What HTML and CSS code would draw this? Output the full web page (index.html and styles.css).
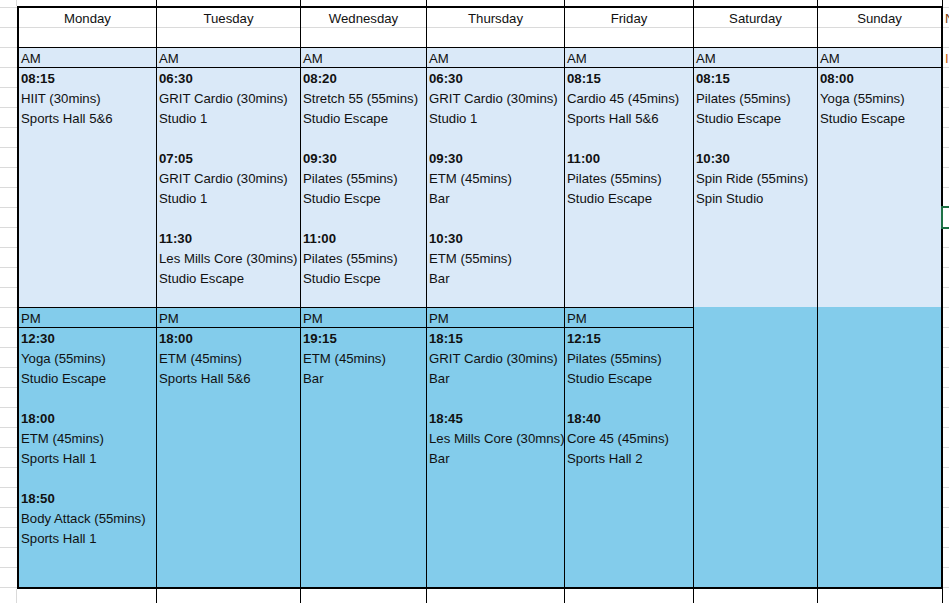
FILE: index.html
```html
<!DOCTYPE html>
<html lang="en">
<head>
<meta charset="utf-8">
<title>Weekly Class Timetable</title>
<link rel="stylesheet" href="styles.css">
</head>
<body>
<div class="page">
  <div class="strip top">
    <div class="c g"></div><div class="c"></div><div class="c"></div><div class="c"></div><div class="c"></div><div class="c"></div><div class="c"></div><div class="c"></div><div class="c n"></div>
  </div>
  <div class="mid">
    <div class="stub left"></div>
    <div class="sheet">
      <div class="day">
        <div class="hdr">Monday</div>
        <div class="blank"></div>
        <div class="lbl am">AM</div>
        <div class="body am">
          <div class="ln t">08:15</div><div class="ln">HIIT (30mins)</div><div class="ln">Sports Hall 5&amp;6</div>
        </div>
        <div class="lbl pm">PM</div>
        <div class="body pm">
          <div class="ln t">12:30</div><div class="ln">Yoga (55mins)</div><div class="ln">Studio Escape</div><div class="ln"></div>
          <div class="ln t">18:00</div><div class="ln">ETM (45mins)</div><div class="ln">Sports Hall 1</div><div class="ln"></div>
          <div class="ln t">18:50</div><div class="ln">Body Attack (55mins)</div><div class="ln">Sports Hall 1</div>
        </div>
      </div>
      <div class="day">
        <div class="hdr">Tuesday</div>
        <div class="blank"></div>
        <div class="lbl am">AM</div>
        <div class="body am">
          <div class="ln t">06:30</div><div class="ln">GRIT Cardio (30mins)</div><div class="ln">Studio 1</div><div class="ln"></div>
          <div class="ln t">07:05</div><div class="ln">GRIT Cardio (30mins)</div><div class="ln">Studio 1</div><div class="ln"></div>
          <div class="ln t">11:30</div><div class="ln">Les Mills Core (30mins)</div><div class="ln">Studio Escape</div>
        </div>
        <div class="lbl pm">PM</div>
        <div class="body pm">
          <div class="ln t">18:00</div><div class="ln">ETM (45mins)</div><div class="ln">Sports Hall 5&amp;6</div>
        </div>
      </div>
      <div class="day">
        <div class="hdr">Wednesday</div>
        <div class="blank"></div>
        <div class="lbl am">AM</div>
        <div class="body am">
          <div class="ln t">08:20</div><div class="ln">Stretch 55 (55mins)</div><div class="ln">Studio Escape</div><div class="ln"></div>
          <div class="ln t">09:30</div><div class="ln">Pilates (55mins)</div><div class="ln">Studio Escpe</div><div class="ln"></div>
          <div class="ln t">11:00</div><div class="ln">Pilates (55mins)</div><div class="ln">Studio Escpe</div>
        </div>
        <div class="lbl pm">PM</div>
        <div class="body pm">
          <div class="ln t">19:15</div><div class="ln">ETM (45mins)</div><div class="ln">Bar</div>
        </div>
      </div>
      <div class="day">
        <div class="hdr">Thursday</div>
        <div class="blank"></div>
        <div class="lbl am">AM</div>
        <div class="body am">
          <div class="ln t">06:30</div><div class="ln">GRIT Cardio (30mins)</div><div class="ln">Studio 1</div><div class="ln"></div>
          <div class="ln t">09:30</div><div class="ln">ETM (45mins)</div><div class="ln">Bar</div><div class="ln"></div>
          <div class="ln t">10:30</div><div class="ln">ETM (55mins)</div><div class="ln">Bar</div>
        </div>
        <div class="lbl pm">PM</div>
        <div class="body pm">
          <div class="ln t">18:15</div><div class="ln">GRIT Cardio (30mins)</div><div class="ln">Bar</div><div class="ln"></div>
          <div class="ln t">18:45</div><div class="ln">Les Mills Core (30mns)</div><div class="ln">Bar</div>
        </div>
      </div>
      <div class="day">
        <div class="hdr">Friday</div>
        <div class="blank"></div>
        <div class="lbl am">AM</div>
        <div class="body am">
          <div class="ln t">08:15</div><div class="ln">Cardio 45 (45mins)</div><div class="ln">Sports Hall 5&amp;6</div><div class="ln"></div>
          <div class="ln t">11:00</div><div class="ln">Pilates (55mins)</div><div class="ln">Studio Escape</div>
        </div>
        <div class="lbl pm">PM</div>
        <div class="body pm">
          <div class="ln t">12:15</div><div class="ln">Pilates (55mins)</div><div class="ln">Studio Escape</div><div class="ln"></div>
          <div class="ln t">18:40</div><div class="ln">Core 45 (45mins)</div><div class="ln">Sports Hall 2</div>
        </div>
      </div>
      <div class="day">
        <div class="hdr">Saturday</div>
        <div class="blank"></div>
        <div class="lbl am">AM</div>
        <div class="body am open">
          <div class="ln t">08:15</div><div class="ln">Pilates (55mins)</div><div class="ln">Studio Escape</div><div class="ln"></div>
          <div class="ln t">10:30</div><div class="ln">Spin Ride (55mins)</div><div class="ln">Spin Studio</div>
        </div>
        <div class="fill pm"></div>
      </div>
      <div class="day">
        <div class="hdr">Sunday</div>
        <div class="blank"></div>
        <div class="lbl am">AM</div>
        <div class="body am open">
          <div class="ln t">08:00</div><div class="ln">Yoga (55mins)</div><div class="ln">Studio Escape</div>
        </div>
        <div class="fill pm"></div>
      </div>
    </div>
    <div class="stub right">
      <div class="rs first dark">N</div>
      <div class="rs"></div>
      <div class="rs orange">I</div>
    </div>
  </div>
  <div class="strip bottom">
    <div class="c g"></div><div class="c"></div><div class="c"></div><div class="c"></div><div class="c"></div><div class="c"></div><div class="c"></div><div class="c"></div><div class="c n"></div>
  </div>
  <div class="sel"></div>
</div>
</body>
</html>
```

FILE: styles.css
```css
html, body {
  margin: 0;
  padding: 0;
  background: #ffffff;
}

body {
  font-family: "Liberation Sans", Arial, sans-serif;
  font-size: 13.2px;
  color: #111111;
  width: 949px;
  height: 603px;
  overflow: hidden;
}

.page {
  position: relative;
  display: flex;
  flex-direction: column;
  width: 949px;
  height: 603px;
}

.strip {
  display: grid;
  grid-template-columns: 17px 140px 144px 126px 138px 129px 124px 125px 6px;
}

.strip.top {
  height: 6px;
}

.strip.bottom {
  height: 14px;
}

.strip .c {
  box-sizing: border-box;
  border-right: 1px solid #000000;
}

.strip .c.g {
  border-right-color: #dadada;
}

.strip .c.n {
  border-right: 0;
}

.mid {
  display: flex;
  height: 583px;
}

.stub {
  box-sizing: border-box;
  background-image: linear-gradient(to bottom, transparent 19px, #dadada 19px);
  background-size: 100% 20px;
  background-position: 0 2px;
}

.stub.left {
  width: 17px;
}

.stub.right {
  width: 6px;
  padding-left: 2px;
  overflow: hidden;
  display: flex;
  flex-direction: column;
}

.rs {
  height: 20px;
  line-height: 22px;
  white-space: nowrap;
}

.rs.first {
  margin-top: 2px;
}

.rs.dark {
  color: #7a3d0d;
}

.rs.orange {
  color: #c65911;
}

.sheet {
  box-sizing: border-box;
  width: 926px;
  height: 583px;
  border: 2px solid #000000;
  background: #ffffff;
  display: grid;
  grid-template-columns: 138px 144px 126px 138px 129px 124px 123px;
}

.day {
  display: flex;
  flex-direction: column;
  min-width: 0;
  border-right: 1px solid #000000;
}

.day:last-child {
  border-right: 0;
}

.hdr {
  height: 19px;
  line-height: 22px;
  text-align: center;
  border-bottom: 1px solid #dadada;
  white-space: nowrap;
}

.blank {
  height: 19px;
  border-bottom: 1px solid #000000;
}

.lbl {
  height: 19px;
  line-height: 22px;
  padding-left: 2px;
  border-bottom: 1px solid #000000;
  overflow: hidden;
}

.am {
  background: #dae9f8;
}

.pm {
  background: #83cceb;
}

.body {
  padding-left: 2px;
  overflow: hidden;
}

.body.am {
  height: 239px;
  border-bottom: 1px solid #000000;
}

.body.am.open {
  border-bottom: 0;
}

.body.pm,
.fill {
  flex: 1;
}

.ln {
  height: 20px;
  line-height: 22px;
  white-space: nowrap;
  overflow: hidden;
}

.ln.t {
  font-weight: bold;
}

.sel {
  position: absolute;
  left: 941px;
  top: 206px;
  width: 20px;
  height: 23px;
  box-sizing: border-box;
  border: 2px solid #1e7145;
}
```
